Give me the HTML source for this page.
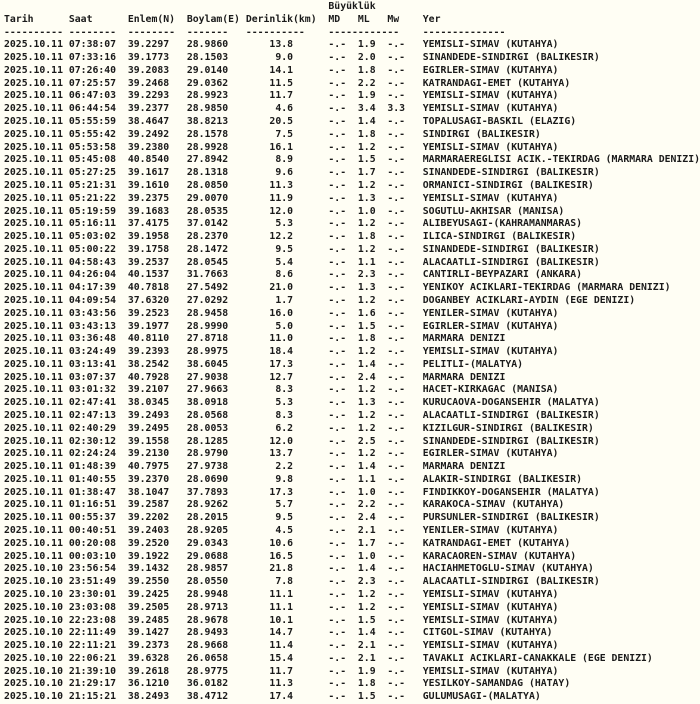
<!DOCTYPE html>
<html><head><meta charset="utf-8"><style>
html,body{margin:0;padding:0;background:#fffef4;width:700px;height:702px;overflow:hidden}
pre{position:absolute;left:4px;top:1px;margin:0;font-family:"DejaVu Sans Mono","Liberation Mono",monospace;font-size:9.8px;line-height:12.78px;font-weight:bold;color:#1a1a1a;white-space:pre}
</style></head><body><pre>                                                       Büyüklük
Tarih      Saat      Enlem(N)  Boylam(E) Derinlik(km)  MD   ML   Mw    Yer
---------- --------  --------  -------   ----------    ------------    --------------
2025.10.11 07:38:07  39.2297   28.9860       13.8      -.-  1.9  -.-   YEMISLI-SIMAV (KUTAHYA)
2025.10.11 07:33:16  39.1773   28.1503        9.0      -.-  2.0  -.-   SINANDEDE-SINDIRGI (BALIKESIR)
2025.10.11 07:26:40  39.2083   29.0140       14.1      -.-  1.8  -.-   EGIRLER-SIMAV (KUTAHYA)
2025.10.11 07:25:57  39.2468   29.0362       11.5      -.-  2.2  -.-   KATRANDAGI-EMET (KUTAHYA)
2025.10.11 06:47:03  39.2293   28.9923       11.7      -.-  1.9  -.-   YEMISLI-SIMAV (KUTAHYA)
2025.10.11 06:44:54  39.2377   28.9850        4.6      -.-  3.4  3.3   YEMISLI-SIMAV (KUTAHYA)
2025.10.11 05:55:59  38.4647   38.8213       20.5      -.-  1.4  -.-   TOPALUSAGI-BASKIL (ELAZIG)
2025.10.11 05:55:42  39.2492   28.1578        7.5      -.-  1.8  -.-   SINDIRGI (BALIKESIR)
2025.10.11 05:53:58  39.2380   28.9928       16.1      -.-  1.2  -.-   YEMISLI-SIMAV (KUTAHYA)
2025.10.11 05:45:08  40.8540   27.8942        8.9      -.-  1.5  -.-   MARMARAEREGLISI ACIK.-TEKIRDAG (MARMARA DENIZI)
2025.10.11 05:27:25  39.1617   28.1318        9.6      -.-  1.7  -.-   SINANDEDE-SINDIRGI (BALIKESIR)
2025.10.11 05:21:31  39.1610   28.0850       11.3      -.-  1.2  -.-   ORMANICI-SINDIRGI (BALIKESIR)
2025.10.11 05:21:22  39.2375   29.0070       11.9      -.-  1.3  -.-   YEMISLI-SIMAV (KUTAHYA)
2025.10.11 05:19:59  39.1683   28.0535       12.0      -.-  1.0  -.-   SOGUTLU-AKHISAR (MANISA)
2025.10.11 05:16:11  37.4175   37.0142        5.3      -.-  1.2  -.-   ALIBEYUSAGI-(KAHRAMANMARAS)
2025.10.11 05:03:02  39.1958   28.2370       12.2      -.-  1.8  -.-   ILICA-SINDIRGI (BALIKESIR)
2025.10.11 05:00:22  39.1758   28.1472        9.5      -.-  1.2  -.-   SINANDEDE-SINDIRGI (BALIKESIR)
2025.10.11 04:58:43  39.2537   28.0545        5.4      -.-  1.1  -.-   ALACAATLI-SINDIRGI (BALIKESIR)
2025.10.11 04:26:04  40.1537   31.7663        8.6      -.-  2.3  -.-   CANTIRLI-BEYPAZARI (ANKARA)
2025.10.11 04:17:39  40.7818   27.5492       21.0      -.-  1.3  -.-   YENIKOY ACIKLARI-TEKIRDAG (MARMARA DENIZI)
2025.10.11 04:09:54  37.6320   27.0292        1.7      -.-  1.2  -.-   DOGANBEY ACIKLARI-AYDIN (EGE DENIZI)
2025.10.11 03:43:56  39.2523   28.9458       16.0      -.-  1.6  -.-   YENILER-SIMAV (KUTAHYA)
2025.10.11 03:43:13  39.1977   28.9990        5.0      -.-  1.5  -.-   EGIRLER-SIMAV (KUTAHYA)
2025.10.11 03:36:48  40.8110   27.8718       11.0      -.-  1.8  -.-   MARMARA DENIZI
2025.10.11 03:24:49  39.2393   28.9975       18.4      -.-  1.2  -.-   YEMISLI-SIMAV (KUTAHYA)
2025.10.11 03:13:41  38.2542   38.6045       17.3      -.-  1.4  -.-   PELITLI-(MALATYA)
2025.10.11 03:07:37  40.7928   27.9038       12.7      -.-  2.4  -.-   MARMARA DENIZI
2025.10.11 03:01:32  39.2107   27.9663        8.3      -.-  1.2  -.-   HACET-KIRKAGAC (MANISA)
2025.10.11 02:47:41  38.0345   38.0918        5.3      -.-  1.3  -.-   KURUCAOVA-DOGANSEHIR (MALATYA)
2025.10.11 02:47:13  39.2493   28.0568        8.3      -.-  1.2  -.-   ALACAATLI-SINDIRGI (BALIKESIR)
2025.10.11 02:40:29  39.2495   28.0053        6.2      -.-  1.2  -.-   KIZILGUR-SINDIRGI (BALIKESIR)
2025.10.11 02:30:12  39.1558   28.1285       12.0      -.-  2.5  -.-   SINANDEDE-SINDIRGI (BALIKESIR)
2025.10.11 02:24:24  39.2130   28.9790       13.7      -.-  1.2  -.-   EGIRLER-SIMAV (KUTAHYA)
2025.10.11 01:48:39  40.7975   27.9738        2.2      -.-  1.4  -.-   MARMARA DENIZI
2025.10.11 01:40:55  39.2370   28.0690        9.8      -.-  1.1  -.-   ALAKIR-SINDIRGI (BALIKESIR)
2025.10.11 01:38:47  38.1047   37.7893       17.3      -.-  1.0  -.-   FINDIKKOY-DOGANSEHIR (MALATYA)
2025.10.11 01:16:51  39.2587   28.9262        5.7      -.-  2.2  -.-   KARAKOCA-SIMAV (KUTAHYA)
2025.10.11 00:55:37  39.2202   28.2015        9.5      -.-  2.4  -.-   PURSUNLER-SINDIRGI (BALIKESIR)
2025.10.11 00:40:51  39.2403   28.9205        4.5      -.-  2.1  -.-   YENILER-SIMAV (KUTAHYA)
2025.10.11 00:20:08  39.2520   29.0343       10.6      -.-  1.7  -.-   KATRANDAGI-EMET (KUTAHYA)
2025.10.11 00:03:10  39.1922   29.0688       16.5      -.-  1.0  -.-   KARACAOREN-SIMAV (KUTAHYA)
2025.10.10 23:56:54  39.1432   28.9857       21.8      -.-  1.4  -.-   HACIAHMETOGLU-SIMAV (KUTAHYA)
2025.10.10 23:51:49  39.2550   28.0550        7.8      -.-  2.3  -.-   ALACAATLI-SINDIRGI (BALIKESIR)
2025.10.10 23:30:01  39.2425   28.9948       11.1      -.-  1.2  -.-   YEMISLI-SIMAV (KUTAHYA)
2025.10.10 23:03:08  39.2505   28.9713       11.1      -.-  1.2  -.-   YEMISLI-SIMAV (KUTAHYA)
2025.10.10 22:23:08  39.2485   28.9678       10.1      -.-  1.5  -.-   YEMISLI-SIMAV (KUTAHYA)
2025.10.10 22:11:49  39.1427   28.9493       14.7      -.-  1.4  -.-   CITGOL-SIMAV (KUTAHYA)
2025.10.10 22:11:21  39.2373   28.9668       11.4      -.-  2.1  -.-   YEMISLI-SIMAV (KUTAHYA)
2025.10.10 22:06:21  39.6328   26.0658       15.4      -.-  2.1  -.-   TAVAKLI ACIKLARI-CANAKKALE (EGE DENIZI)
2025.10.10 21:39:10  39.2618   28.9775       11.7      -.-  1.9  -.-   YEMISLI-SIMAV (KUTAHYA)
2025.10.10 21:29:17  36.1210   36.0182       11.3      -.-  1.8  -.-   YESILKOY-SAMANDAG (HATAY)
2025.10.10 21:15:21  38.2493   38.4712       17.4      -.-  1.5  -.-   GULUMUSAGI-(MALATYA)
</pre></body></html>
